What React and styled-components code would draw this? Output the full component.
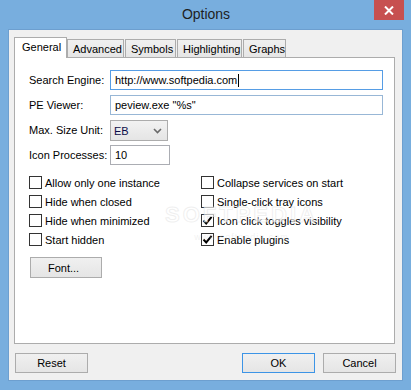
import React from 'react';
import styled, { createGlobalStyle } from 'styled-components';

const Global = createGlobalStyle`
  html, body {
    margin: 0;
    padding: 0;
    background: #78aede;
  }
  body {
    font-family: "Liberation Sans", Arial, sans-serif;
  }
`;

const Window = styled.div`
  width: 411px;
  height: 390px;
  background: #78aede;
  display: flex;
  flex-direction: column;
  box-sizing: border-box;
`;

const TitleBar = styled.div`
  height: 29px;
  display: grid;
  grid-template-columns: 1fr auto 1fr;
  align-items: start;
`;

const Title = styled.div`
  grid-column: 2;
  font-size: 14px;
  line-height: 29px;
  color: #1e1e1e;
  padding-left: 1px;
`;

const CloseBtn = styled.div`
  grid-column: 3;
  justify-self: end;
  margin-right: 7px;
  width: 30px;
  height: 20px;
  background: #c75050;
  display: flex;
  align-items: center;
  justify-content: center;
`;

const Client = styled.div`
  flex: 1;
  margin: 0 8px 9px 8px;
  background: #f0f0f0;
  border: 1px solid #6d9fcf;
  padding: 7px 7px 7px 5px;
  display: flex;
  flex-direction: column;
  font-size: 11px;
  color: #000;
`;

const TabRow = styled.div`
  display: flex;
  align-items: flex-end;
  height: 21px;
`;

const Tab = styled.div`
  box-sizing: border-box;
  width: ${p => p.w}px;
  margin-right: ${p => (p.gap ? 1 : 0)}px;
  height: ${p => (p.active ? 21 : 19)}px;
  border: 1px solid #acacac;
  border-bottom: none;
  background: ${p => (p.active ? '#ffffff' : 'linear-gradient(#f0f0f0, #e5e5e5)')};
  position: ${p => (p.active ? 'relative' : 'static')};
  z-index: ${p => (p.active ? 1 : 'auto')};
  padding-left: ${p => (p.active ? 7 : 5)}px;
  line-height: 18px;
  white-space: nowrap;
`;

const Panel = styled.div`
  flex: 1;
  margin-top: -1px;
  background: #fff;
  border: 1px solid #acacac;
  padding: 12px 14px;
  display: flex;
  flex-direction: column;
  position: relative;
`;

const FormGrid = styled.div`
  display: grid;
  grid-template-columns: 81px auto;
  grid-auto-rows: 20px;
  row-gap: 5px;
  align-items: center;
`;

const Label = styled.div`
  white-space: nowrap;
`;

const TextBox = styled.div`
  box-sizing: border-box;
  width: ${p => p.w}px;
  height: 20px;
  border: 1px solid ${p => p.border || '#abadb3'};
  background: #fff;
  padding: 0 4px;
  line-height: 18px;
  display: flex;
  align-items: center;
  white-space: nowrap;
`;

const Caret = styled.span`
  display: inline-block;
  width: 1px;
  height: 13px;
  background: #000;
  margin-left: 1px;
`;

const Select = styled.div`
  box-sizing: border-box;
  width: 58px;
  height: 21px;
  margin-top: 1px;
  border: 1px solid #acacac;
  background: linear-gradient(#f2f2f2, #e5e5e5);
  display: flex;
  align-items: center;
  justify-content: space-between;
  padding: 0 5px 0 3px;
  color: #0c0c48;
`;

const Checks = styled.div`
  margin-top: 8px;
  display: grid;
  grid-template-columns: 172px auto;
  grid-template-rows: repeat(4, 19px);
  grid-auto-flow: column;
`;

const CheckRow = styled.label`
  display: flex;
  align-items: center;
  gap: 3px;
  white-space: nowrap;
`;

const Box = styled.span`
  box-sizing: border-box;
  width: 13px;
  height: 13px;
  border: 1px solid #333;
  background: #fff;
  display: flex;
  align-items: center;
  justify-content: center;
`;

const Button = styled.div`
  box-sizing: border-box;
  width: ${p => p.w || 73}px;
  height: ${p => p.h || 20}px;
  border: 1px solid ${p => (p.primary ? '#3c94e6' : '#acacac')};
  background: linear-gradient(#f0f0f0, #e5e5e5);
  display: flex;
  align-items: center;
  justify-content: center;
  margin-left: ${p => p.ml || 0}px;
`;

const FontButton = styled(Button)`
  margin-top: 8px;
  margin-left: 1px;
  justify-content: flex-start;
  padding-left: 17px;
`;

const BottomBar = styled.div`
  display: flex;
  margin-top: 9px;
  margin-left: 1px;
  margin-right: -1px;
`;

const Spacer = styled.div`
  flex: 1;
`;

const Watermark = styled.div`
  position: absolute;
  left: 150px;
  top: 146px;
  pointer-events: none;
  color: rgba(215, 215, 215, 0.35);
  text-align: center;
  line-height: 1;
`;

const WmBig = styled.div`
  font-size: 22px;
  letter-spacing: 3px;
  font-weight: bold;
  color: rgba(255, 255, 255, 0.6);
  -webkit-text-stroke: 1px rgba(220, 220, 220, 0.45);
`;

const WmSmall = styled.div`
  font-size: 9px;
  margin-top: 7px;
  letter-spacing: 1px;
`;

const Check = () => (
  <svg width="11" height="11" viewBox="0 0 11 11">
    <path d="M1.5 5.5 L4.2 8.4 L9.6 1.8" fill="none" stroke="#000" strokeWidth="2" />
  </svg>
);

const CheckBox = ({ checked, children }) => (
  <CheckRow>
    <Box>{checked && <Check />}</Box>
    {children}
  </CheckRow>
);

const tabs = [
  { name: 'General', w: 53, active: true },
  { name: 'Advanced', w: 57, gap: true },
  { name: 'Symbols', w: 51, gap: true },
  { name: 'Highlighting', w: 65, gap: true },
  { name: 'Graphs', w: 43 },
];

const options = [
  ['Allow only one instance', false],
  ['Hide when closed', false],
  ['Hide when minimized', false],
  ['Start hidden', false],
  ['Collapse services on start', false],
  ['Single-click tray icons', false],
  ['Icon click toggles visibility', true],
  ['Enable plugins', true],
];

export default function App() {
  return (
    <>
      <Global />
      <Window>
        <TitleBar>
          <Title>Options</Title>
          <CloseBtn>
            <svg width="10" height="9" viewBox="0 0 10 9">
              <path d="M1 0.5 L9 8.5 M9 0.5 L1 8.5" stroke="#fff" strokeWidth="2" />
            </svg>
          </CloseBtn>
        </TitleBar>
        <Client>
          <TabRow>
            {tabs.map(t => (
              <Tab key={t.name} w={t.w} active={t.active} gap={t.gap}>
                {t.name}
              </Tab>
            ))}
          </TabRow>
          <Panel>
            <FormGrid>
              <Label>Search Engine:</Label>
              <TextBox w={273} border="#569de5">
                http://www.softpedia.com<Caret />
              </TextBox>
              <Label>PE Viewer:</Label>
              <TextBox w={273} border="#98b7d6">
                peview.exe "%s"
              </TextBox>
              <Label>Max. Size Unit:</Label>
              <Select>
                <span>EB</span>
                <svg width="9" height="6" viewBox="0 0 9 6">
                  <path d="M1 1 L4.5 4.5 L8 1" fill="none" stroke="#6a6a6a" strokeWidth="1.6" />
                </svg>
              </Select>
              <Label>Icon Processes:</Label>
              <TextBox w={60}>10</TextBox>
            </FormGrid>
            <Checks>
              {options.map(([label, checked]) => (
                <CheckBox key={label} checked={checked}>
                  {label}
                </CheckBox>
              ))}
            </Checks>
            <FontButton w={72} h={21}>Font...</FontButton>
            <Watermark>
              <WmBig>SOFTPEDIA</WmBig>
              <WmSmall>www.softpedia.com</WmSmall>
            </Watermark>
          </Panel>
          <BottomBar>
            <Button>Reset</Button>
            <Spacer />
            <Button primary>OK</Button>
            <Button ml={8}>Cancel</Button>
          </BottomBar>
        </Client>
      </Window>
    </>
  );
}
